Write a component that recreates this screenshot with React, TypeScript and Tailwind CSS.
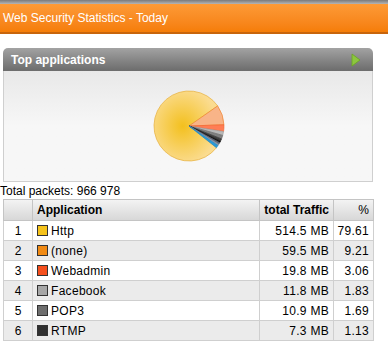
import React from "react";

const rows = [
  { n: 1, name: "Http", color: "#f5c21b", mb: "514.5 MB", pct: "79.61" },
  { n: 2, name: "(none)", color: "#f08a14", mb: "59.5 MB", pct: "9.21" },
  { n: 3, name: "Webadmin", color: "#f5501e", mb: "19.8 MB", pct: "3.06" },
  { n: 4, name: "Facebook", color: "#a6a6a6", mb: "11.8 MB", pct: "1.83" },
  { n: 5, name: "POP3", color: "#6e6e6e", mb: "10.9 MB", pct: "1.69" },
  { n: 6, name: "RTMP", color: "#303030", mb: "7.3 MB", pct: "1.13" },
];

const cx = 40, cy = 40, r = 35;
function pt(a: number) {
  const rad = (a * Math.PI) / 180;
  return `${(cx + r * Math.cos(rad)).toFixed(2)} ${(cy + r * Math.sin(rad)).toFixed(2)}`;
}
function slice(a1: number, a2: number) {
  const large = a2 - a1 > 180 ? 1 : 0;
  return `M${cx} ${cy} L${pt(a1)} A${r} ${r} 0 ${large} 1 ${pt(a2)} Z`;
}

const slices = [
  { a1: -35, a2: -2, fill: "#f8b488", stroke: "#f07a1e" },
  { a1: -2, a2: 9, fill: "#ff7d55", stroke: "#f0602a" },
  { a1: 9, a2: 15.6, fill: "#b8b8b8", stroke: "#999" },
  { a1: 15.6, a2: 21.7, fill: "#808080", stroke: "#666" },
  { a1: 21.7, a2: 25.8, fill: "#404040", stroke: "#333" },
  { a1: 25.8, a2: 28.5, fill: "#111", stroke: "#111" },
  { a1: 28.5, a2: 31.5, fill: "#5a6a7a", stroke: "#556" },
  { a1: 31.5, a2: 34, fill: "#8a9aaa", stroke: "#889" },
  { a1: 34, a2: 38.3, fill: "#2a9ad8", stroke: "#1a86c4" },
];

function Pie() {
  return (
    <svg width="80" height="80" viewBox="0 0 80 80">
      <defs>
        <radialGradient id="yg" cx="45%" cy="50%" r="55%">
          <stop offset="0%" stopColor="#f3c01e" />
          <stop offset="100%" stopColor="#fbdc90" />
        </radialGradient>
      </defs>
      <path d={slice(38.3, 325)} fill="url(#yg)" stroke="#e9b548" strokeWidth="0.8" />
      {slices.map((s, i) => (
        <path key={i} d={slice(s.a1, s.a2)} fill={s.fill} stroke={s.stroke} strokeWidth="0.6" />
      ))}
    </svg>
  );
}

export default function App() {
  return (
    <div
      className="w-[388px] h-[341px] bg-white overflow-hidden text-[12px] text-black"
      style={{ fontFamily: '"Liberation Sans", Arial, sans-serif' }}
    >
      <div className="h-[4px] bg-gradient-to-b from-[#7a7a7a] to-[#b5b5b5]" />
      <div className="h-[30px] bg-gradient-to-b from-[#fd9a35] to-[#f57d06] border-b-[2px] border-[#c8650c] flex items-center pl-[3px] text-white text-[12px] pb-[1px]">
        Web Security Statistics - Today
      </div>
      <div className="pt-[14px] pl-[3px] w-[373px]">
        <div className="h-[23px] rounded-t-[5px] bg-gradient-to-b from-[#a3a3a3] to-[#6c6c6c] flex items-center justify-between pl-[8px] pr-[12px]">
          <span className="text-white font-bold text-[12px]">Top applications</span>
          <svg width="10" height="14" viewBox="0 0 10 14">
            <path d="M1 1 L9 7 L1 13 Z" fill="#8dc63f" stroke="#6aa820" strokeWidth="0.8" />
          </svg>
        </div>
        <div className="h-[111px] border border-t-0 border-[#cfcfcf] bg-gradient-to-b from-[#e8e8e8] via-[#f7f7f7] to-[#f7f7f7] flex justify-center pt-[15px]">
          <div className="ml-[2px]">
            <Pie />
          </div>
        </div>
        <div className="ml-[-3px] h-[17px] leading-[17px] pt-[1px]">Total packets: 966 978</div>
        <table className="border-collapse w-[370px] mt-[0px] table-fixed">
          <colgroup>
            <col className="w-[29px]" />
            <col className="w-[227px]" />
            <col className="w-[74px]" />
            <col className="w-[40px]" />
          </colgroup>
          <thead>
            <tr className="h-[21px] bg-gradient-to-b from-[#f3f3f3] to-[#d6d6d6]">
              <th className="border border-[#c4c4c4]" />
              <th className="border border-[#c4c4c4] text-left pl-[4px] font-bold">Application</th>
              <th className="border border-[#c4c4c4] text-right pr-[4px] font-bold">total Traffic</th>
              <th className="border border-[#c4c4c4] text-right pr-[4px] font-normal">%</th>
            </tr>
          </thead>
          <tbody>
            {rows.map((r) => (
              <tr key={r.n} className={`h-[20px] ${r.n % 2 === 0 ? "bg-[#ebebeb]" : "bg-white"}`}>
                <td className="border border-[#cfcfcf] text-center">{r.n}</td>
                <td className="border border-[#cfcfcf] pl-[4px]">
                  <div className="flex items-center gap-[3px]">
                    <span
                      className="inline-block w-[11px] h-[11px] border border-[#333]"
                      style={{ backgroundColor: r.color }}
                    />
                    <span className="tracking-[0.3px]">{r.name}</span>
                  </div>
                </td>
                <td className="border border-[#cfcfcf] text-right pr-[4px] tracking-[0.3px]">{r.mb}</td>
                <td className="border border-[#cfcfcf] text-right pr-[4px] tracking-[0.3px]">{r.pct}</td>
              </tr>
            ))}
          </tbody>
        </table>
      </div>
    </div>
  );
}
